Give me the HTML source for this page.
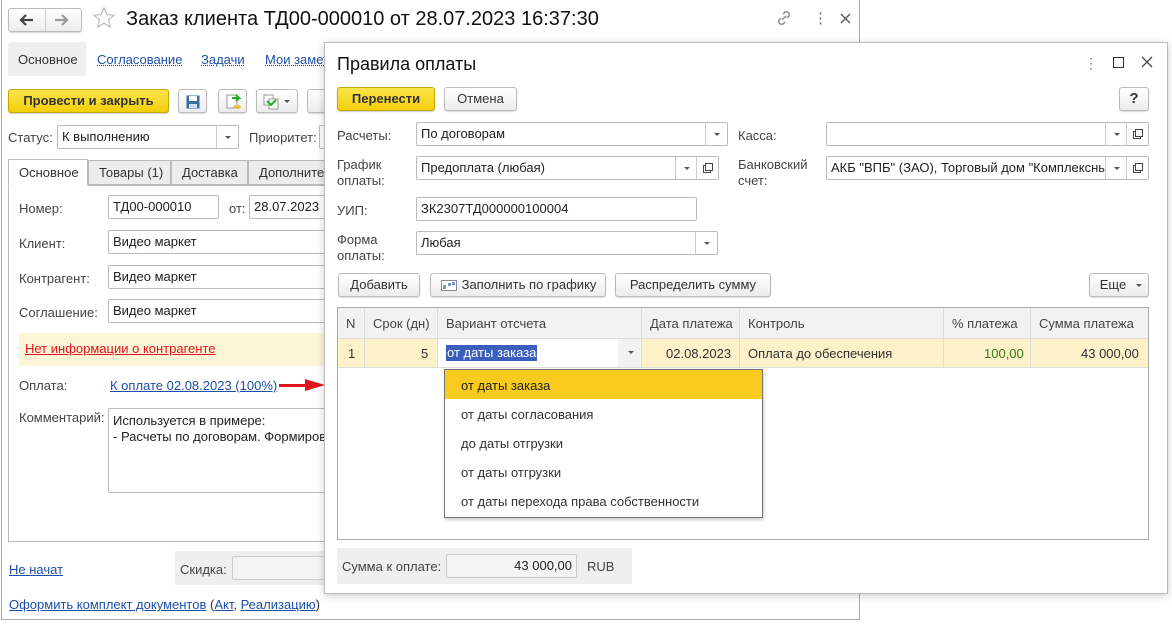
<!DOCTYPE html><html><head><meta charset="utf-8"><style>
*{box-sizing:border-box;margin:0;padding:0}
body{width:1172px;height:624px;position:relative;background:#fff;font-family:"Liberation Sans",Arial,sans-serif;font-size:13px;color:#333;overflow:hidden}
.a{position:absolute;white-space:nowrap}
.inp{position:absolute;border:1px solid #bbb;border-radius:2px;background:#fff;padding:0 4px;line-height:22px;height:24px;overflow:hidden;white-space:nowrap;color:#222}
.dd{position:absolute;top:0;bottom:0;width:22px;border-left:1px solid #ccc;background:#fff}
.dd:after{content:"";position:absolute;left:8px;top:10px;border:3px solid transparent;border-top:3px solid #555}
.op{position:absolute;top:0;bottom:0;width:22px;border-left:1px solid #ccc;background:#fff}
.op:after{content:"";position:absolute;left:8px;top:6px;width:6px;height:6px;border:1px solid #444;box-shadow:-2px 2px 0 -1px #fff,-2px 2px 0 0 #444}
.btn{position:absolute;border:1px solid #bbb;border-radius:3px;background:linear-gradient(#fff,#ececec);height:24px;line-height:22px;text-align:center;color:#333;box-shadow:0 1px 1px rgba(0,0,0,.15)}
.ybtn{position:absolute;border:1px solid #c7a800;border-radius:3px;background:linear-gradient(#fbe54a,#f4cf0a);font-weight:bold;height:24px;line-height:22px;text-align:center;color:#333;box-shadow:0 1px 1px rgba(0,0,0,.2)}
.lnk{color:#1c4fa8;text-decoration:underline}
.lab{position:absolute;color:#444}
</style></head><body>
<div class="a" style="left:1px;top:0;width:859px;height:620px;border:1px solid #aaa;border-top:none"></div>
<div class="btn" style="left:8px;top:8px;width:74px;height:24px"></div>
<div class="a" style="left:45px;top:9px;width:1px;height:22px;background:#ccc"></div>
<svg class="a" style="left:18px;top:13px" width="16" height="14"><path d="M15 7H3M8 2L3 7l5 5" stroke="#444" stroke-width="2.2" fill="none"/></svg>
<svg class="a" style="left:54px;top:13px" width="16" height="14"><path d="M1 7h12M8 2l5 5-5 5" stroke="#999" stroke-width="2.2" fill="none"/></svg>
<svg class="a" style="left:92px;top:6px" width="24" height="24"><path d="M12 2l2.9 6.6 7.1.6-5.4 4.7 1.6 7-6.2-3.7-6.2 3.7 1.6-7L2 9.2l7.1-.6z" stroke="#bbb" stroke-width="1.2" fill="none"/></svg>
<div class="a" style="left:126px;top:8px;font-size:20px;color:#111">Заказ клиента ТД00-000010 от 28.07.2023 16:37:30</div>
<svg class="a" style="left:776px;top:10px" width="16" height="16"><path d="M6 10l4-4M7 4l2-2a3 3 0 014 4l-2 2M9 12l-2 2a3 3 0 01-4-4l2-2" stroke="#888" stroke-width="1.4" fill="none"/></svg>
<div class="a" style="left:813px;top:9px;color:#666;font-size:15px">⋮</div>
<svg class="a" style="left:840px;top:13px" width="11" height="11"><path d="M1 1l9 9M10 1l-9 9" stroke="#555" stroke-width="1.3"/></svg>

<div class="a" style="left:8px;top:42px;width:78px;height:34px;background:#efefef;border-radius:3px"></div>
<div class="a" style="left:18px;top:52px;color:#333">Основное</div>
<div class="a lnk" style="left:97px;top:52px;text-decoration:underline dotted">Согласование</div>
<div class="a lnk" style="left:201px;top:52px;text-decoration:underline dotted">Задачи</div>
<div class="a lnk" style="left:265px;top:52px;text-decoration:underline dotted">Мои заметки</div>

<div class="ybtn" style="left:8px;top:89px;width:161px">Провести и закрыть</div>
<div class="btn" style="left:178px;top:89px;width:29px"><svg style="position:absolute;left:7px;top:5px" width="14" height="14"><rect x="0.5" y="0.5" width="13" height="13" fill="#3a6ea5"/><rect x="3" y="1" width="8" height="5" fill="#fff"/><rect x="3" y="9" width="8" height="4" fill="#cde"/></svg></div>
<div class="btn" style="left:218px;top:89px;width:29px"><svg style="position:absolute;left:7px;top:4px" width="16" height="16"><rect x="1" y="1" width="10" height="13" fill="#fff" stroke="#999"/><path d="M6 4h7l-3-3M13 4l-3 3" stroke="#2a2" stroke-width="2" fill="none"/><ellipse cx="11" cy="13" rx="4" ry="2" fill="#e8c040"/></svg></div>
<div class="btn" style="left:256px;top:89px;width:42px"><svg style="position:absolute;left:6px;top:4px" width="16" height="16"><rect x="1" y="1" width="9" height="10" fill="#fff" stroke="#999"/><rect x="6" y="5" width="9" height="10" fill="#fff" stroke="#999"/><path d="M4 7l4 4 5-5" stroke="#2a2" stroke-width="2" fill="none"/></svg><span style="position:absolute;left:27px;top:10px;border:3px solid transparent;border-top:3px solid #555"></span></div>
<div class="btn" style="left:307px;top:89px;width:30px"></div>

<div class="lab" style="left:8px;top:130px">Статус:</div>
<div class="inp" style="left:57px;top:125px;width:182px">К выполнению<div class="dd" style="right:0"></div></div>
<div class="lab" style="left:249px;top:130px">Приоритет:</div>
<div class="inp" style="left:319px;top:125px;width:30px"></div>

<div class="a" style="left:8px;top:185px;width:852px;height:357px;border:1px solid #bbb"></div>
<div class="a" style="left:8px;top:159px;width:80px;height:27px;border:1px solid #bbb;border-bottom:1px solid #fff;background:#fff;padding:5px 10px">Основное</div>
<div class="a" style="left:88px;top:160px;width:83px;height:25px;border:1px solid #bbb;background:#ececec;padding:4px 10px">Товары (1)</div>
<div class="a" style="left:171px;top:160px;width:77px;height:25px;border:1px solid #bbb;background:#ececec;padding:4px 10px">Доставка</div>
<div class="a" style="left:248px;top:160px;width:90px;height:25px;border:1px solid #bbb;background:#ececec;padding:4px 10px">Дополнительно</div>

<div class="lab" style="left:19px;top:201px">Номер:</div>
<div class="inp" style="left:108px;top:195px;width:111px">ТД00-000010</div>
<div class="lab" style="left:229px;top:201px">от:</div>
<div class="inp" style="left:249px;top:195px;width:90px">28.07.2023</div>
<div class="lab" style="left:19px;top:236px">Клиент:</div>
<div class="inp" style="left:108px;top:230px;width:230px">Видео маркет</div>
<div class="lab" style="left:19px;top:271px">Контрагент:</div>
<div class="inp" style="left:108px;top:265px;width:230px">Видео маркет</div>
<div class="lab" style="left:19px;top:305px">Соглашение:</div>
<div class="inp" style="left:108px;top:299px;width:230px">Видео маркет</div>
<div class="a" style="left:19px;top:333px;width:320px;height:33px;background:#fcf6d8"></div>
<div class="a" style="left:25px;top:341px;color:#e0141c;text-decoration:underline">Нет информации о контрагенте</div>
<div class="lab" style="left:19px;top:378px">Оплата:</div>
<div class="a lnk" style="left:110px;top:378px">К оплате 02.08.2023 (100%)</div>
<div class="a" style="left:279px;top:384px;width:30px;height:3px;background:#e0141c"></div>
<div class="a" style="left:305px;top:379px;border:6px solid transparent;border-left:20px solid #e0141c;width:0;height:0"></div>
<div class="lab" style="left:19px;top:410px">Комментарий:</div>
<div class="a" style="left:108px;top:408px;width:230px;height:85px;border:1px solid #bbb;border-radius:2px;padding:4px;line-height:16px;color:#222">Используется в примере:<br>- Расчеты по договорам. Формирование</div>

<div class="a lnk" style="left:9px;top:562px">Не начат</div>
<div class="a" style="left:175px;top:551px;width:160px;height:34px;background:#efefef"></div>
<div class="lab" style="left:180px;top:562px">Скидка:</div>
<div class="inp" style="left:232px;top:556px;width:100px;background:#f4f4f4;border-color:#ccc"></div>
<div class="a" style="left:9px;top:597px"><span class="lnk">Оформить комплект документов</span> (<span class="lnk">Акт</span>, <span class="lnk">Реализацию</span>)</div>

<div class="a" style="left:324px;top:42px;width:844px;height:552px;background:#fff;border:1px solid #bbb;box-shadow:0 2px 8px rgba(0,0,0,.2)"></div>
<div class="a" style="left:337px;top:54px;font-size:18px;color:#111">Правила оплаты</div>
<div class="a" style="left:1084px;top:55px;color:#777;font-size:14px">⋮</div>
<div class="a" style="left:1113px;top:57px;width:11px;height:11px;border:1.5px solid #333"></div>
<svg class="a" style="left:1141px;top:56px" width="12" height="12"><path d="M1 1l10 10M11 1L1 11" stroke="#444" stroke-width="1.3"/></svg>
<div class="ybtn" style="left:337px;top:87px;width:98px">Перенести</div>
<div class="btn" style="left:444px;top:87px;width:73px">Отмена</div>
<div class="btn" style="left:1119px;top:87px;width:30px;font-weight:bold;font-size:15px">?</div>

<div class="lab" style="left:337px;top:128px">Расчеты:</div>
<div class="inp" style="left:416px;top:122px;width:312px">По договорам<div class="dd" style="right:0"></div></div>
<div class="lab" style="left:337px;top:157px;line-height:16px">График<br>оплаты:</div>
<div class="inp" style="left:416px;top:156px;width:303px">Предоплата (любая)<div class="dd" style="right:21px"></div><div class="op" style="right:0"></div></div>
<div class="lab" style="left:337px;top:203px">УИП:</div>
<div class="inp" style="left:416px;top:197px;width:281px">ЗК2307ТД000000100004</div>
<div class="lab" style="left:337px;top:232px;line-height:16px">Форма<br>оплаты:</div>
<div class="inp" style="left:416px;top:231px;width:302px">Любая<div class="dd" style="right:0"></div></div>

<div class="lab" style="left:738px;top:128px">Касса:</div>
<div class="inp" style="left:826px;top:122px;width:323px"><div class="dd" style="right:21px"></div><div class="op" style="right:0"></div></div>
<div class="lab" style="left:738px;top:157px;line-height:16px">Банковский<br>счет:</div>
<div class="inp" style="left:826px;top:156px;width:323px">АКБ "ВПБ" (ЗАО), Торговый дом "Комплексный"<div class="dd" style="right:21px"></div><div class="op" style="right:0"></div></div>

<div class="btn" style="left:338px;top:273px;width:82px">Добавить</div>
<div class="btn" style="left:430px;top:273px;width:176px;padding-left:22px">Заполнить по графику<svg style="position:absolute;left:10px;top:6px" width="16" height="11"><rect x="0.5" y="0.5" width="15" height="10" fill="#fff" stroke="#889"/><rect x="2" y="5" width="3" height="4" fill="#7a9ac8"/><rect x="7" y="3" width="3" height="3" fill="#7a9ac8"/><rect x="11" y="2" width="3" height="3" fill="#7a9ac8"/></svg></div>
<div class="btn" style="left:615px;top:273px;width:156px">Распределить сумму</div>
<div class="btn" style="left:1089px;top:273px;width:60px;padding-right:12px">Еще<span style="position:absolute;left:46px;top:10px;border:3px solid transparent;border-top:3px solid #555"></span></div>

<div class="a" style="left:337px;top:307px;width:812px;height:233px;border:1px solid #aaa"></div>
<div class="a" style="left:338px;top:308px;width:810px;height:31px;background:#f2f2f2;border-bottom:1px solid #ddd"></div>
<div class="a" style="left:338px;top:339px;width:810px;height:28px;background:#fcf1c8"></div>
<div class="a" style="left:438px;top:339px;width:203px;height:28px;background:#fff"></div>
<div class="a" style="left:618px;top:339px;width:23px;height:28px;background:#f2f2f2"></div>
<div class="a" style="left:628px;top:351px;border:3px solid transparent;border-top:3px solid #555"></div>
<div class="a" style="left:364px;top:308px;width:1px;height:59px;background:#ddd"></div>
<div class="a" style="left:437px;top:308px;width:1px;height:59px;background:#ddd"></div>
<div class="a" style="left:641px;top:308px;width:1px;height:59px;background:#ddd"></div>
<div class="a" style="left:739px;top:308px;width:1px;height:59px;background:#ddd"></div>
<div class="a" style="left:943px;top:308px;width:1px;height:59px;background:#ddd"></div>
<div class="a" style="left:1030px;top:308px;width:1px;height:59px;background:#ddd"></div>
<div class="a" style="left:338px;top:367px;width:810px;height:1px;background:#ddd"></div>
<div class="lab" style="left:346px;top:316px">N</div>
<div class="lab" style="left:373px;top:316px">Срок (дн)</div>
<div class="lab" style="left:446px;top:316px">Вариант отсчета</div>
<div class="lab" style="left:650px;top:316px">Дата платежа</div>
<div class="lab" style="left:748px;top:316px">Контроль</div>
<div class="lab" style="left:952px;top:316px">% платежа</div>
<div class="lab" style="left:1039px;top:316px">Сумма платежа</div>
<div class="a" style="left:348px;top:346px">1</div>
<div class="a" style="left:421px;top:346px">5</div>
<div class="a" style="left:446px;top:345px;background:#3c5fbf;color:#fff;padding:0 1px;line-height:16px">от даты заказа</div>
<div class="a" style="left:666px;top:346px">02.08.2023</div>
<div class="a" style="left:748px;top:346px">Оплата до обеспечения</div>
<div class="a" style="left:984px;top:346px;color:#3a7a1a">100,00</div>
<div class="a" style="left:1081px;top:346px">43 000,00</div>

<div class="a" style="left:444px;top:369px;width:319px;height:149px;background:#fff;border:1px solid #777;box-shadow:1px 2px 3px rgba(0,0,0,.2)"></div>
<div class="a" style="left:445px;top:370px;width:317px;height:29px;background:#f8cb1e"></div>
<div class="a" style="left:461px;top:378px;color:#222">от даты заказа</div>
<div class="a" style="left:461px;top:407px">от даты согласования</div>
<div class="a" style="left:461px;top:436px">до даты отгрузки</div>
<div class="a" style="left:461px;top:465px">от даты отгрузки</div>
<div class="a" style="left:461px;top:494px">от даты перехода права собственности</div>

<div class="a" style="left:337px;top:548px;width:295px;height:36px;background:#efefef"></div>
<div class="lab" style="left:342px;top:559px">Сумма к оплате:</div>
<div class="inp" style="left:446px;top:554px;width:131px;text-align:right;background:#f4f4f4;border-color:#ccc">43 000,00</div>
<div class="lab" style="left:587px;top:559px">RUB</div>
</body></html>
